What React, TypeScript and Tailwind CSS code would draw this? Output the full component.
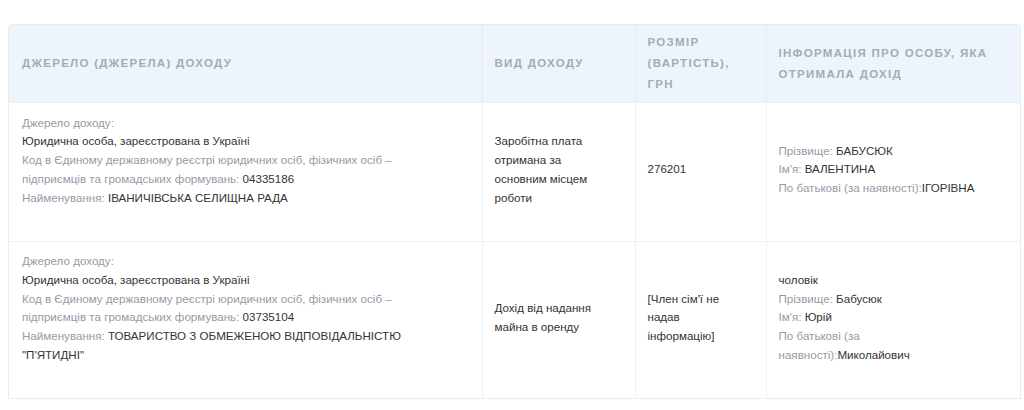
import React from "react";

const L = ({ children }: { children: React.ReactNode }) => (
  <span className="text-[#959ba6]">{children}</span>
);

const th =
  "border-r border-[#e6ebf1] pl-[12px] pr-[10px] py-[7px] text-left align-middle text-[11.5px] font-bold uppercase leading-[21px] tracking-[1.3px] text-[#a3abb7]";
const td =
  "border-r border-t border-[#edf0f4] pl-[12px] pr-[38px] pt-[10.5px] pb-[14.5px] align-middle";

export default function App() {
  return (
    <div className="bg-white w-[1024px] h-[410px] pt-[24px] pl-[8px] overflow-hidden" style={{ fontFamily: '"Liberation Sans", Arial, sans-serif' }}>
      <div className="w-[1013px] rounded-t-[4px] border border-[#e8ecf1] overflow-hidden">
        <table className="w-full table-fixed border-collapse text-[11.6px] leading-[18.75px] text-[#333]">
          <colgroup>
            <col className="w-[473px]" />
            <col className="w-[153px]" />
            <col className="w-[131px]" />
            <col className="w-[254px]" />
          </colgroup>
          <thead>
            <tr className="bg-[#eef4fb] h-[77px]">
              <th className={th + " pl-[13px]"}>Джерело (джерела) доходу</th>
              <th className={th}>Вид доходу</th>
              <th className={th}>Розмір (вартість), грн</th>
              <th className={th + " border-r-0"}>Інформація про особу, яка отримала дохід</th>
            </tr>
          </thead>
          <tbody>
            <tr>
              <td className={td + " pl-[13px] align-top"}>
                <div><L>Джерело доходу:</L></div>
                <div>Юридична особа, зареєстрована в Україні</div>
                <div>
                  <L>Код в Єдиному державному реєстрі юридичних осіб, фізичних осіб – підприємців та громадських формувань: </L>
                  04335186
                </div>
                <div>
                  <L>Найменування: </L>ІВАНИЧІВСЬКА СЕЛИЩНА РАДА
                </div>
                <div className="h-[18.75px]" />
              </td>
              <td className={td}>Заробітна плата отримана за основним місцем роботи</td>
              <td className={td}>276201</td>
              <td className={td + " border-r-0"}>
                <div><L>Прізвище: </L>БАБУСЮК</div>
                <div><L>Ім'я: </L>ВАЛЕНТИНА</div>
                <div><L>По батькові (за наявності):</L>ІГОРІВНА</div>
              </td>
            </tr>
            <tr>
              <td className={td + " pl-[13px] align-top"}>
                <div><L>Джерело доходу:</L></div>
                <div>Юридична особа, зареєстрована в Україні</div>
                <div>
                  <L>Код в Єдиному державному реєстрі юридичних осіб, фізичних осіб – підприємців та громадських формувань: </L>
                  03735104
                </div>
                <div>
                  <L>Найменування: </L>ТОВАРИСТВО З ОБМЕЖЕНОЮ ВІДПОВІДАЛЬНІСТЮ "П'ЯТИДНІ"
                </div>
                <div className="h-[18.75px]" />
              </td>
              <td className={td}>Дохід від надання майна в оренду</td>
              <td className={td}>[Член сім'ї не надав інформацію]</td>
              <td className={td + " border-r-0"}>
                <div>чоловік</div>
                <div><L>Прізвище: </L>Бабусюк</div>
                <div><L>Ім'я: </L>Юрій</div>
                <div><L>По батькові (за наявності):</L>Миколайович</div>
              </td>
            </tr>
          </tbody>
        </table>
      </div>
    </div>
  );
}
